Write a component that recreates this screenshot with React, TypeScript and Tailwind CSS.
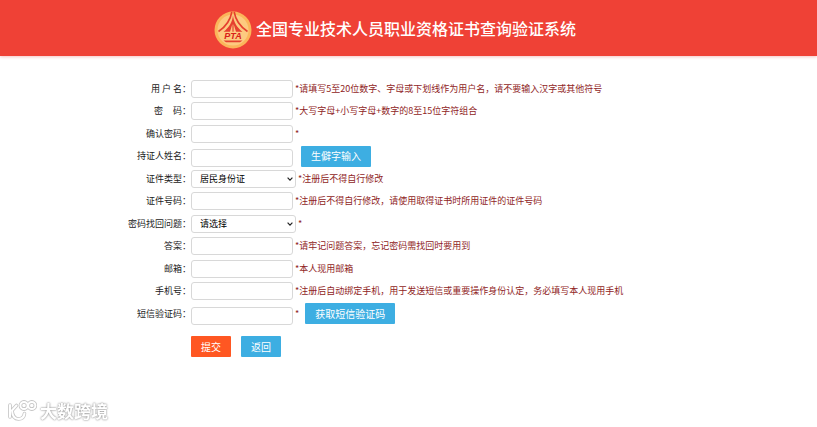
import type { ReactNode } from "react";

type Field = {
  id: string;
  label: string;
  hint?: string;
  type?: "text" | "password" | "email" | "tel";
  options?: string[];
  action?: string;
};

const fields: Field[] = [
  {
    id: "username",
    label: "用\u00a0户\u00a0名：",
    hint: "*请填写5至20位数字、字母或下划线作为用户名，请不要输入汉字或其他符号",
  },
  {
    id: "password",
    label: "密\u00a0\u00a0\u00a0\u00a0\u00a0码：",
    hint: "*大写字母+小写字母+数字的8至15位字符组合",
    type: "password",
  },
  { id: "confirm", label: "确认密码：", hint: "*", type: "password" },
  { id: "holder", label: "持证人姓名：", action: "生僻字输入" },
  {
    id: "idType",
    label: "证件类型：",
    hint: "*注册后不得自行修改",
    options: ["居民身份证", "护照", "军官证"],
  },
  {
    id: "idNumber",
    label: "证件号码：",
    hint: "*注册后不得自行修改，请使用取得证书时所用证件的证件号码",
  },
  {
    id: "question",
    label: "密码找回问题：",
    hint: "*",
    options: ["请选择"],
  },
  { id: "answer", label: "答案：", hint: "*请牢记问题答案，忘记密码需找回时要用到" },
  { id: "email", label: "邮箱：", hint: "*本人现用邮箱", type: "email" },
  {
    id: "phone",
    label: "手机号：",
    hint: "*注册后自动绑定手机，用于发送短信或重要操作身份认定，务必填写本人现用手机",
    type: "tel",
  },
  { id: "smsCode", label: "短信验证码：", hint: "*", action: "获取短信验证码" },
];

function Logo() {
  return (
    <svg viewBox="0 0 38 38" className="mt-[4px] size-[38px] shrink-0" aria-hidden="true">
      <circle cx="19" cy="19" r="18.5" fill="#fbb55a" />
      <circle cx="19" cy="19" r="15.5" fill="#fdca80" />
      <path
        d="M17.8 1 C16.5 9 12 15.5 4.5 20.5 M20.2 1 C21.5 9 26 15.5 33.5 20.5"
        fill="none"
        stroke="#e5402f"
        strokeWidth="1.6"
      />
      <path d="M19 4 C18.5 11 15 16.5 9.5 20.8 H16 L18.4 13 V20.8 H19.6 V13 L22 20.8 H28.5 C23 16.5 19.5 11 19 4 Z" fill="#e5402f" />
      <path d="M9.5 29.6 H28.5 L26 31.2 H12 Z" fill="#e5402f" />
      <text
        x="19"
        y="28"
        textAnchor="middle"
        fontSize="9"
        fontWeight="700"
        fontStyle="italic"
        fontFamily="Liberation Sans, sans-serif"
        fill="#d8201a"
      >
        PTA
      </text>
    </svg>
  );
}

function Button({
  children,
  type = "button",
  tone = "blue",
}: {
  children: ReactNode;
  type?: "button" | "submit";
  tone?: "blue" | "orange";
}) {
  return (
    <button
      type={type}
      className={`h-[21px] rounded-[1px] px-[10px] text-[10px] leading-[20px] text-white ${
        tone === "orange" ? "bg-[#ff5722]" : "bg-[#3daee2]"
      }`}
    >
      {children}
    </button>
  );
}

function Select({ id, options }: { id: string; options: string[] }) {
  return (
    <div className="grid w-[105px] shrink-0 items-center">
      <select
        id={id}
        className="col-start-1 row-start-1 h-[18px] appearance-none rounded-[3px] border border-[#d8d8d8] bg-white pl-[8px] leading-[16px] text-black"
      >
        {options.map((option) => (
          <option key={option}>{option}</option>
        ))}
      </select>
      <svg
        viewBox="0 0 6 4"
        className="pointer-events-none col-start-1 row-start-1 mr-[3px] h-[4px] w-[6px] justify-self-end"
        fill="none"
        stroke="#222"
        strokeWidth="1.2"
        aria-hidden="true"
      >
        <path d="M0.6 0.7 L3 3.1 L5.4 0.7" />
      </svg>
    </div>
  );
}

function FieldRow({ field }: { field: Field }) {
  return (
    <div className="flex items-center odd:h-[23px] even:h-[22px]">
      <label htmlFor={field.id} className="w-[63px] shrink-0 text-right whitespace-nowrap text-[#222]">
        {field.label}
      </label>
      {field.options ? (
        <Select id={field.id} options={field.options} />
      ) : (
        <input
          id={field.id}
          type={field.type ?? "text"}
          className={`h-[18px] w-[102px] rounded-[3px] border border-[#d8d8d8] bg-white px-1 ${
            field.action ? "self-end" : ""
          }`}
        />
      )}
      {field.hint && <span className="ml-[2px] text-[#8f2424]">{field.hint}</span>}
      {field.action && (
        <div className={field.hint ? "ml-[6px]" : "ml-[8px]"}>
          <Button>{field.action}</Button>
        </div>
      )}
    </div>
  );
}

function Watermark() {
  return (
    <div className="fixed bottom-[5px] left-[8px] flex items-center gap-[3px]">
      <svg viewBox="0 0 29 22" className="h-[22px] w-[29px]" fill="none" aria-hidden="true">
        <g stroke="#c4c4c4" strokeWidth="3.6" strokeLinecap="round" strokeLinejoin="round">
          <path d="M2 5 V17 M8.5 5.5 L4 10.5 C4.5 16.5 7 19 10.5 19 C14 19 16 17 16.5 13.5" />
          <circle cx="16" cy="5.5" r="3.6" />
          <circle cx="23.8" cy="5.5" r="3.6" />
        </g>
        <g stroke="#fff" strokeWidth="2" strokeLinecap="round" strokeLinejoin="round">
          <path d="M2 5 V17 M8.5 5.5 L4 10.5 C4.5 16.5 7 19 10.5 19 C14 19 16 17 16.5 13.5" />
          <circle cx="16" cy="5.5" r="3.6" />
          <circle cx="23.8" cy="5.5" r="3.6" />
        </g>
      </svg>
      <span className="text-[17px] leading-[22px] font-bold text-white [text-shadow:0_0_2px_#999,0_0_2px_#aaa]">
        大数跨境
      </span>
    </div>
  );
}

export default function App() {
  return (
    <div className="min-h-screen bg-white font-['Noto_Sans_CJK_SC',sans-serif] text-[9px] leading-[18px]">
      <header className="bg-[#ef4136] shadow-[0_1px_3px_#f5c4c4]">
        <div className="mx-auto flex h-[56px] max-w-[389px] items-center gap-[4px]">
          <Logo />
          <h1 className="text-[16px] leading-[24px] font-medium whitespace-nowrap text-white">
            全国专业技术人员职业资格证书查询验证系统
          </h1>
        </div>
      </header>

      <main className="mx-auto max-w-[561px] pt-[21px]">
        <form onSubmit={(event) => event.preventDefault()}>
          <div>
            {fields.map((field) => (
              <FieldRow key={field.id} field={field} />
            ))}
          </div>
          <div className="mt-[11px] flex gap-[10px] pl-[63px]">
            <Button type="submit" tone="orange">
              提交
            </Button>
            <Button>返回</Button>
          </div>
        </form>
      </main>

      <Watermark />
    </div>
  );
}
